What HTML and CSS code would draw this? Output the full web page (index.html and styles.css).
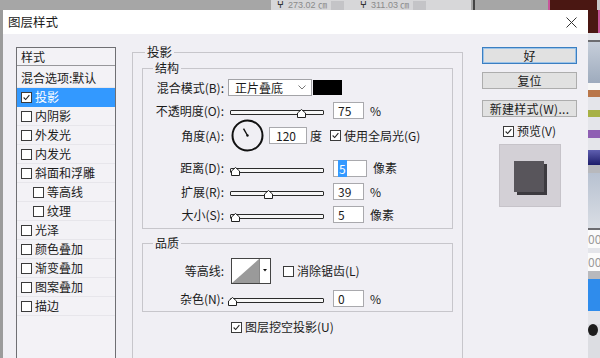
FILE: index.html
```html
<!doctype html>
<html lang="zh-CN">
<head>
    <meta charset="UTF-8">
    <title>图层样式</title>
    <link rel="stylesheet" href="styles.css">
</head>
<body>
<div class="topstrip">
    <div class="ts-gap"></div>
    <div class="ts-box"><span class="ts-ico">ⵖ</span>273.02 ㎝<span class="ts-dd"></span><span class="ts-ico">ⵖ</span>311.03 ㎝<span class="ts-dd"></span></div>
    <div class="ts-div"></div>
    <div class="ts-fill"></div>
    <div class="ts-img"></div>
    <div class="ts-end"></div>
</div>
<div class="deskrow">
    <div class="leftedge"></div>
    <div class="dialog">
        <div class="titlebar">
            <span>图层样式</span>
            <svg class="close" width="11" height="11" viewBox="0 0 11 11"><path d="M0.5 0.5 L10.5 10.5 M10.5 0.5 L0.5 10.5" stroke="#333" stroke-width="1"/></svg>
        </div>
        <div class="dlgbody">
            <div class="stylelist">
                <div class="listhead">样式</div>
                <div class="listrow">混合选项:默认</div>
                <div class="listrow active"><span class="cb"><svg viewBox="0 0 11 11"><path d="M2 5.5 L4.5 8 L9 2.5" stroke="#222" fill="none" stroke-width="1.3"/></svg></span>投影</div>
                <div class="listrow"><span class="cb"></span>内阴影</div>
                <div class="listrow"><span class="cb"></span>外发光</div>
                <div class="listrow"><span class="cb"></span>内发光</div>
                <div class="listrow"><span class="cb"></span>斜面和浮雕</div>
                <div class="listrow sub"><span class="cb"></span>等高线</div>
                <div class="listrow sub"><span class="cb"></span>纹理</div>
                <div class="listrow"><span class="cb"></span>光泽</div>
                <div class="listrow"><span class="cb"></span>颜色叠加</div>
                <div class="listrow"><span class="cb"></span>渐变叠加</div>
                <div class="listrow"><span class="cb"></span>图案叠加</div>
                <div class="listrow"><span class="cb"></span>描边</div>
            </div>

            <fieldset class="outer">
                <legend>投影</legend>
                <fieldset class="group">
                    <legend>结构</legend>
                    <div class="frow mb6">
                        <span class="flabel">混合模式(B):</span>
                        <div class="select">正片叠底<svg width="8" height="5" viewBox="0 0 8 5"><path d="M0.5 0.5 L4 4 L7.5 0.5" stroke="#777" fill="none"/></svg></div>
                        <div class="colorbox"></div>
                    </div>
                    <div class="frow">
                        <span class="flabel">不透明度(O):</span>
                        <div class="slider"><span class="thumb" style="left: 66px"></span></div>
                        <div class="num">75</div>
                        <span class="unit">%</span>
                    </div>
                    <div class="frow angle">
                        <span class="flabel">角度(A):</span>
                        <svg class="dial" width="33" height="33" viewBox="0 0 33 33">
                            <circle cx="16.5" cy="16.5" r="15" stroke="#111" stroke-width="2" fill="none"/>
                            <path d="M16.5 16.5 L12.5 9.6" stroke="#111" stroke-width="1.4"/>
                            <circle cx="16.5" cy="16.5" r="1.2" fill="#111"/>
                        </svg>
                        <div class="num wide">120</div>
                        <span class="unit deg">度</span>
                        <span class="cb gl"><svg viewBox="0 0 11 11"><path d="M2 5.5 L4.5 8 L9 2.5" stroke="#222" fill="none" stroke-width="1.3"/></svg></span>
                        <span class="cbtext">使用全局光(G)</span>
                    </div>
                    <div class="frow tall">
                        <span class="flabel">距离(D):</span>
                        <div class="slider"><span class="thumb" style="left: 0px"></span></div>
                        <div class="num wide2"><span class="sel">5</span></div>
                        <span class="unit">像素</span>
                    </div>
                    <div class="frow mt6">
                        <span class="flabel">扩展(R):</span>
                        <div class="slider"><span class="thumb" style="left: 33px"></span></div>
                        <div class="num">39</div>
                        <span class="unit">%</span>
                    </div>
                    <div class="frow mt6">
                        <span class="flabel">大小(S):</span>
                        <div class="slider"><span class="thumb" style="left: 0px"></span></div>
                        <div class="num">5</div>
                        <span class="unit">像素</span>
                    </div>
                </fieldset>

                <fieldset class="group quality">
                    <legend>品质</legend>
                    <div class="frow contour">
                        <span class="flabel">等高线:</span>
                        <svg class="curve" width="40" height="26" viewBox="0 0 40 26">
                            <rect x="0.5" y="0.5" width="39" height="25" fill="#fff" stroke="#444"/>
                            <polygon points="1,25 28,1 28,25" fill="#9a9a9a"/>
                            <path d="M28.5 1 V25" stroke="#888"/>
                            <polygon points="32,11 36,11 34,13.5" fill="#111"/>
                        </svg>
                        <span class="cb aa"></span>
                        <span class="cbtext">消除锯齿(L)</span>
                    </div>
                    <div class="frow mt6">
                        <span class="flabel">杂色(N):</span>
                        <div class="slider"><span class="thumb" style="left: -3px"></span></div>
                        <div class="num">0</div>
                        <span class="unit">%</span>
                    </div>
                </fieldset>

                <div class="knockout">
                    <span class="cb"><svg viewBox="0 0 11 11"><path d="M2 5.5 L4.5 8 L9 2.5" stroke="#222" fill="none" stroke-width="1.3"/></svg></span>
                    <span class="cbtext">图层挖空投影(U)</span>
                </div>
            </fieldset>

            <div class="actions">
                <div class="btn default">好</div>
                <div class="btn">复位</div>
                <div class="btn wide">新建样式(W)...</div>
                <div class="previewrow">
                    <span class="cb"><svg viewBox="0 0 11 11"><path d="M2 5.5 L4.5 8 L9 2.5" stroke="#222" fill="none" stroke-width="1.3"/></svg></span>
                    <span class="cbtext">预览(V)</span>
                </div>
                <div class="preview"><div class="preview-sq"></div></div>
            </div>
        </div>
    </div>
    <div class="panels">
        <div class="p-img"></div>
        <div class="p-light h7"></div>
        <div class="p-line"></div>
        <div class="p-grad1"></div>
        <div class="p-white h7"></div>
        <div class="p-orange"></div>
        <div class="p-light h13"></div>
        <div class="p-olive"></div>
        <div class="p-light h13"></div>
        <div class="p-purple"></div>
        <div class="p-light h12"></div>
        <div class="p-navy"></div>
        <div class="p-gray"></div>
        <div class="p-grad2"></div>
        <div class="p-line"></div>
        <div class="p-text">00</div>
        <div class="p-light h5"></div>
        <div class="p-text">00</div>
        <div class="p-gray"></div>
        <div class="p-blue"></div>
        <div class="p-light h13"></div>
        <div class="p-dot"></div>
    </div>
</div>
</body>
</html>
```

FILE: styles.css
```css
html, body {
    margin: 0;
    padding: 0;
}

body {
    width: 600px;
    height: 358px;
    overflow: hidden;
    background: #a6a6a6;
    font-family: "Noto Sans CJK SC", "Liberation Sans", sans-serif;
    font-size: 12px;
    line-height: 14px;
    color: #1b1b1b;
}

/* photoshop bits behind the dialog */
.topstrip {
    height: 10px;
    display: flex;
    overflow: hidden;
}

.ts-gap {
    width: 271px;
}

.ts-box {
    width: 200px;
    background: #d7d7d9;
    color: #8a8a8a;
    font-family: "Liberation Sans", sans-serif;
    font-size: 9px;
    line-height: 10px;
    display: flex;
    align-items: center;
    gap: 4px;
    padding-left: 6px;
    box-sizing: border-box;
}

.ts-ico {
    color: #333;
}

.ts-dd {
    width: 13px;
    height: 9px;
    background: #c4c4c7;
    margin-right: 12px;
}

.ts-div {
    width: 2px;
    background: #444;
    margin-left: 2px;
}

.ts-fill {
    flex: 1;
}

.ts-img {
    width: 47px;
    background: #4a1712;
    border-left: 2px solid #c8559a;
}

.ts-end {
    width: 3px;
    background: #c8c8c8;
}

.deskrow {
    display: flex;
    height: 348px;
}

.leftedge {
    width: 3px;
    background: #9b9b9b;
}

.panels {
    width: 12px;
    display: flex;
    flex-direction: column;
    background: #dcdde2;
    overflow: hidden;
}

.p-img { height: 23px; background: #4a1712; border-right: 2px solid #c8559a; }
.p-light { background: #e4e5ea; }
.p-white { background: #f6f6f6; }
.h5 { height: 5px; }
.h7 { height: 7px; }
.h12 { height: 12px; }
.h13 { height: 13px; }
.p-line { height: 2px; background: #6c6c70; }
.p-grad1 { height: 41px; background: linear-gradient(#c6ceda, #9eabbd); }
.p-orange { height: 7px; background: #b9764a; }
.p-olive { height: 7px; background: #a7b145; }
.p-purple { height: 8px; background: #8f5fb3; }
.p-navy { height: 15px; background: linear-gradient(#5f5fb0, #1d1d6a); }
.p-gray { height: 8px; background: #b8b9bd; }
.p-grad2 { height: 55px; background: linear-gradient(#b8c2d1, #d9dde4); }
.p-text { height: 18px; background: #fbfbfb; color: #999; font-size: 12px; line-height: 18px; }
.p-blue { height: 32px; background: #2f8cec; }
.p-dot { height: 12px; width: 10px; border-radius: 50%; background: #1c1c1c; }

/* dialog */
.dialog {
    width: 585px;
    background: #f0eff4;
    display: flex;
    flex-direction: column;
}

.titlebar {
    height: 24px;
    flex: none;
    background: #fff;
    display: flex;
    align-items: center;
    justify-content: space-between;
    padding: 0 11px 0 5px;
    font-size: 12.5px;
}

.dlgbody {
    flex: 1;
    display: flex;
    align-items: flex-start;
    overflow: hidden;
}

/* style list */
.stylelist {
    margin: 13px 0 0 13px;
    width: 100px;
    height: 330px;
    flex: none;
    box-sizing: border-box;
    border: 1px solid #6f6f73;
    background: #f3f2f6;
}

.listhead {
    height: 17px;
    line-height: 17px;
    padding-left: 4px;
    border-bottom: 1px solid #97979b;
    margin-bottom: 3px;
}

.listrow {
    height: 19px;
    box-sizing: border-box;
    display: flex;
    align-items: center;
    gap: 3px;
    padding-left: 4px;
    border-bottom: 1px solid #e7e6eb;
}

.listrow.sub {
    padding-left: 16px;
}

.listrow.active {
    background: #3399ff;
    color: #fff;
    border-bottom-color: #3399ff;
}

/* checkbox */
.cb {
    width: 11px;
    height: 11px;
    flex: none;
    box-sizing: border-box;
    border: 1px solid #3a3a3a;
    background: #fff;
    display: inline-flex;
}

.cb svg {
    width: 9px;
    height: 9px;
}

.cbtext {
    margin-left: 3px;
}

/* group boxes */
fieldset {
    margin: 0;
    min-width: 0;
    border: 1px solid #c7c6cb;
}

legend {
    padding: 0 2px;
    line-height: 14px;
}

.outer {
    margin: 11px 0 0 16px;
    width: 331px;
    height: 330px;
    flex: none;
    box-sizing: border-box;
    padding: 2px 9px 0;
}

.outer > legend {
    margin-left: 3px;
    font-size: 12.5px;
}

.group {
    padding: 4px 0 5px;
}

.group > legend {
    margin-left: 10px;
}

.quality {
    margin-top: 7px;
    padding: 8px 0 4px;
}

.frow {
    height: 17px;
    display: flex;
    align-items: center;
}

.frow.tall {
    height: 18px;
}

.frow.angle {
    height: 33px;
    margin-bottom: 7px;
}

.frow.contour {
    height: 26px;
}

.mb6 { margin-bottom: 6px; }
.mt6 { margin-top: 6px; }

.flabel {
    width: 81px;
    flex: none;
    text-align: right;
    margin-right: 4px;
}

.select {
    width: 84px;
    height: 17px;
    box-sizing: border-box;
    border: 1px solid #a3a3a7;
    background: #fff;
    display: flex;
    align-items: center;
    justify-content: space-between;
    padding: 0 5px 0 6px;
}

.colorbox {
    width: 29px;
    height: 15px;
    margin-left: 1px;
    background: #000;
}

.slider {
    position: relative;
    width: 94px;
    height: 5px;
    box-sizing: border-box;
    margin: 4px 0 0 2px;
    border: 1px solid #2b2b2b;
    border-radius: 1px;
    background: #f7f7f7;
}

.thumb {
    position: absolute;
    top: -2px;
    width: 9px;
    height: 9px;
    background: url("data:image/svg+xml,%3Csvg xmlns='http://www.w3.org/2000/svg' width='9' height='9'%3E%3Cpath d='M0.5 4 L4.5 0.5 L8.5 4 V8.5 H0.5 Z' fill='white' stroke='%23222'/%3E%3C/svg%3E");
}

.num {
    width: 31px;
    height: 17px;
    box-sizing: border-box;
    margin-left: 9px;
    border: 1px solid #a9a9ad;
    background: #fff;
    padding-left: 4px;
    line-height: 15px;
}

.num.wide {
    width: 38px;
    margin-left: 5px;
    padding-left: 6px;
}

.num.wide2 {
    width: 34px;
}

.sel {
    background: #3399ff;
    color: #fff;
    padding: 0 1px;
}

.unit {
    margin-left: 6px;
}

.unit.deg {
    margin-left: 3px;
}

.dial {
    margin-left: 3px;
    flex: none;
}

.cb.gl {
    margin-left: 8px;
}

.curve {
    margin-left: 3px;
    flex: none;
}

.cb.aa {
    margin-left: 12px;
}

.knockout {
    margin: 8px 0 0 89px;
    height: 14px;
    display: flex;
    align-items: center;
}

/* right column */
.actions {
    margin: 13px 0 0 19px;
    width: 95px;
    flex: none;
    display: flex;
    flex-direction: column;
}

.btn {
    height: 17px;
    box-sizing: border-box;
    border: 1px solid #adadad;
    background: #e1e1e1;
    display: flex;
    align-items: center;
    justify-content: center;
    margin-top: 8px;
}

.btn.default {
    margin-top: 0;
    border-color: #3b7fc2;
    box-shadow: inset 0 0 0 1px #9cc3e8;
}

.btn.wide {
    margin-top: 11px;
    letter-spacing: 0.3px;
}

.previewrow {
    height: 14px;
    margin-top: 7px;
    display: flex;
    align-items: center;
    justify-content: center;
}

.preview {
    width: 62px;
    height: 63px;
    box-sizing: border-box;
    margin: 6px auto 0;
    border: 1px solid #c6c3c9;
    background: #d3d0d6;
    display: flex;
    align-items: center;
    justify-content: center;
}

.preview-sq {
    width: 30px;
    height: 31px;
    margin: 2px 2px 0 0;
    background: #58555b;
    box-shadow: 3px 3px 0 #3c3a3f;
}
```
